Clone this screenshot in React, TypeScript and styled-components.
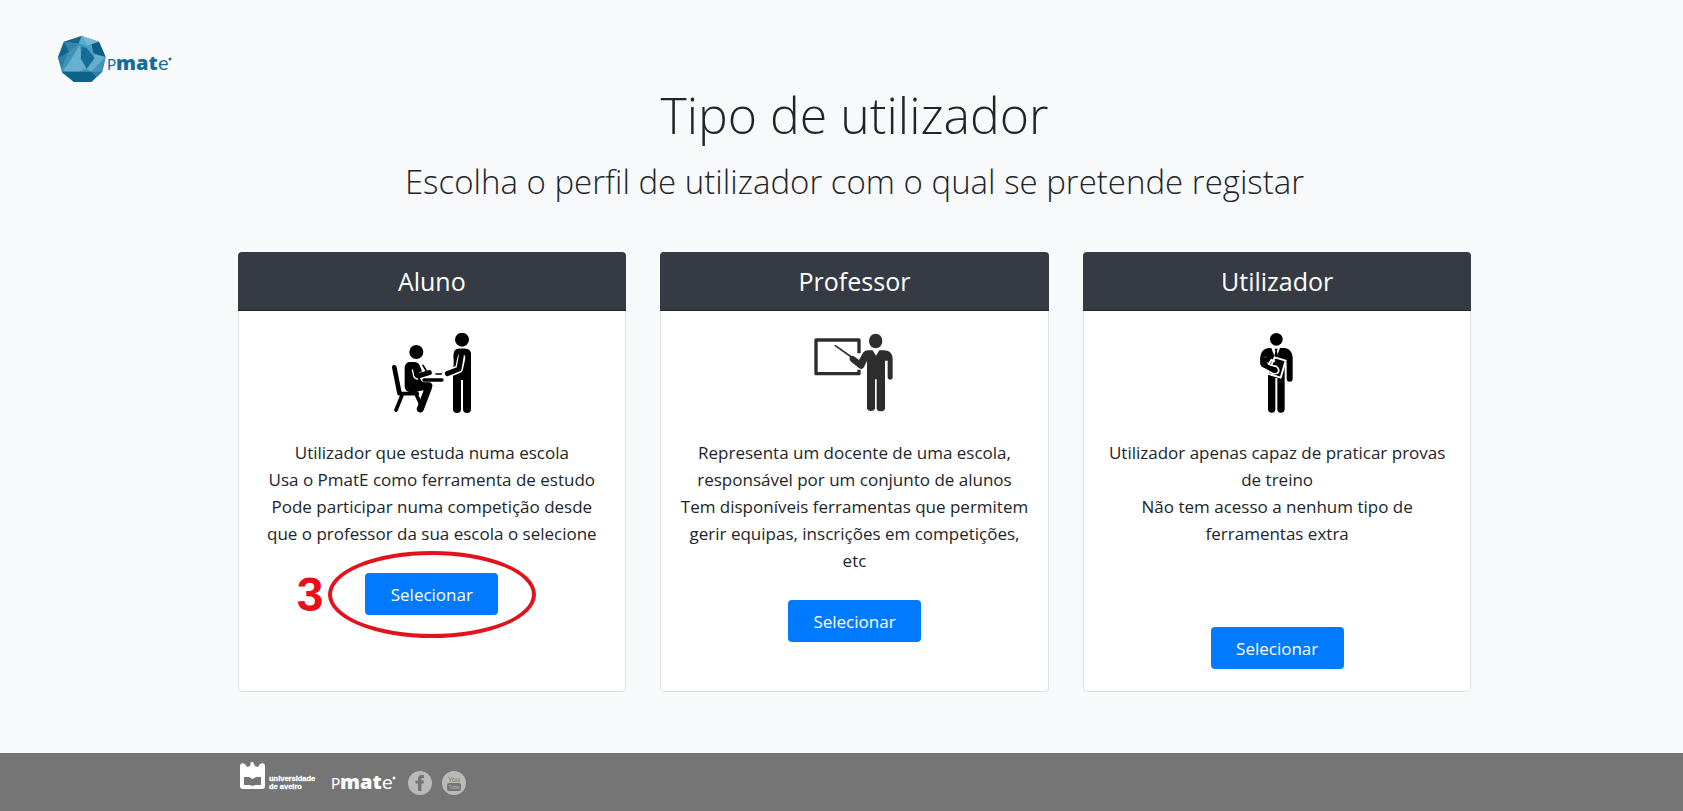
import React from 'react';
import styled, { createGlobalStyle } from 'styled-components';

const GlobalStyle = createGlobalStyle`
  *, *::before, *::after { box-sizing: border-box; }
  body {
    margin: 0;
    background: #f8f9fb;
    color: #212529;
    font-family: "Segoe UI", "Open Sans", "Noto Sans", sans-serif;
    font-size: 17px;
    line-height: 27px;
  }
`;

const Page = styled.div`
  display: flex;
  flex-direction: column;
  min-height: 100vh;
`;

const Header = styled.header`
  display: flex;
  padding: 33px 56px 0;
`;

const LogoLink = styled.a`
  display: block;
  height: 52px;
`;

const Main = styled.main`
  flex: 1;
  padding: 0 0 61px 26px;
`;

const Container = styled.div`
  max-width: 1234px;
  margin: 0 auto;
`;

const Title = styled.h1`
  margin: 0;
  font-size: 50px;
  font-weight: 300;
  line-height: 60px;
  text-align: center;
`;

const Subtitle = styled.p`
  margin: 17px 0 50px;
  font-size: 33px;
  font-weight: 300;
  line-height: 40px;
  text-align: center;
`;

const CardGrid = styled.div`
  display: grid;
  grid-template-columns: repeat(3, 1fr);
  gap: 34px;
`;

const Card = styled.section`
  display: flex;
  flex-direction: column;
  background: #fff;
  border: 1px solid #dfe1e4;
  border-radius: 4px;
  text-align: center;
`;

const CardTitle = styled.h2`
  margin: -1px -1px 0;
  padding: 15px 0 14px;
  background: #363a42;
  border-bottom: 1px solid #22252a;
  border-radius: 4px 4px 0 0;
  color: #fff;
  font-size: 25px;
  font-weight: 400;
  line-height: 29px;
`;

const CardBody = styled.div`
  display: flex;
  flex-direction: column;
  align-items: center;
  padding: 22px 18px;
`;

const Figure = styled.svg`
  width: 80px;
  height: 80px;
  margin-bottom: 26px;
`;

const Description = styled.ul<{ $spareLines?: number }>`
  margin: 0;
  padding: 0 0 ${(p) => 26 + (p.$spareLines ?? 0) * 27}px;
  list-style: none;
`;

const ButtonSlot = styled.div`
  position: relative;
`;

const SelectButton = styled.button`
  display: block;
  width: 133px;
  height: 42px;
  padding: 0;
  background: #007bff;
  border: 0;
  border-radius: 4px;
  color: #fff;
  font: inherit;
  cursor: pointer;
`;

const Ring = styled.span`
  position: absolute;
  inset: -22px -38px -23px -37px;
  border: 4px solid #e3131b;
  border-radius: 50%;
  pointer-events: none;
`;

const StepNumber = styled.span`
  position: absolute;
  right: calc(100% + 42px);
  top: 0;
  color: #e90f17;
  font: bold 48px/44px "Liberation Sans", Arial, sans-serif;
`;

const Footer = styled.footer`
  padding: 8px 0 16px 26px;
  background: #757575;
`;

const FooterRow = styled(Container)`
  display: flex;
  align-items: flex-end;
  gap: 9px;
`;

const FooterLink = styled.a<{ $tall?: boolean }>`
  display: block;
  height: ${(p) => (p.$tall ? 34 : 24)}px;
  margin-right: ${(p) => (p.$tall ? 0 : 1)}px;
`;

function Wordmark({ x, y, color }: { x: number; y: number; color: string }) {
  return (
    <g fill={color}>
      <text x={x} y={y} fontFamily="Lato, sans-serif" fontSize="15">P</text>
      <text x={x + 9} y={y} fontFamily="Open Sans, sans-serif" fontSize="20" fontWeight="800">mat</text>
      <text x={x + 51} y={y} fontFamily="Lato, sans-serif" fontSize="20">e</text>
      <circle cx={x + 63} cy={y - 11} r="1.5" />
    </g>
  );
}

function PmateLogo() {
  return (
    <svg width="118" height="52" viewBox="0 0 118 52" role="img" aria-label="PmatE">
      <g transform="translate(-2 -2) scale(.33333)">
        <path fill="#3f92b9" d="M83 15 135 32 155 78 145 122 112 153H60L24 125 12 78 30 32Z" />
        <path fill="#17678d" d="M83 15 30 32 74 38Z" />
        <path fill="#3386ad" d="M30 32 74 38 42 65 12 78Z" />
        <path fill="#12658a" d="M30 32 45 63 12 82Z" />
        <path fill="#72b9d7" d="M83 15 135 32 100 45Z" />
        <path fill="#5ba9cb" d="M83 15 100 45 74 38Z" />
        <path fill="#0f5f84" d="M135 32 155 78 118 66 112 40Z" />
        <path fill="#4c9dc3" d="M100 45 112 40 120 72 84 48Z" />
        <path fill="#65b0d1" d="M78 42 28 120 75 122 98 112 82 78Z" />
        <path fill="#166c93" d="M83 47 98 51 122 82 98 114 80 82Z" />
        <path fill="#2c80a7" d="M12 80 42 66 22 112Z" />
        <path fill="#62aed0" d="M118 70 155 78 112 122 98 114 122 82Z" />
        <path fill="#4295bb" d="M155 78 145 122 112 122Z" />
        <path fill="#0e6388" d="M24 122H112L128 137 112 153H60Z" />
        <path fill="#2a82a8" d="M112 122H145L128 138Z" />
      </g>
      <Wordmark x={51} y={37} color="#176d94" />
    </svg>
  );
}

function StudentFigure() {
  return (
    <Figure viewBox="36 39 240 240" aria-hidden="true">
      <g fill="none" stroke="#000" strokeLinecap="round" strokeLinejoin="round">
        <path strokeWidth="14" d="M43 142 58 218" />
        <path strokeWidth="11" d="M58 221H112M66 226 48 270M108 222 121 250" />
        <path strokeWidth="21" d="M100 201H146L121 267" />
        <path strokeWidth="15" d="M103 142 113 168 148 158" />
        <path strokeWidth="10" d="M132 180H186" />
        <path strokeWidth="5" d="M129 136 140 154M168 162H184" />
      </g>
      <circle cx="109" cy="96" r="21" />
      <path d="M88 126H104Q118 127 121 141L126 154 115 159 108 144H102L105 166Q107 173 114 173H119Q123 184 132 187H150Q157 190 158 198L110 216H88Q74 213 74 199V142Q76 128 88 126Z" />
      <path fill="none" stroke="#fff" strokeWidth="4" d="M97 148 101 168Q104 177 114 177" />
      <circle cx="246" cy="59" r="21" />
      <path d="M236 86H256Q272 87 273 103V267A12 12 0 0 1 249 267V180H243V267A12 12 0 0 1 219 267V161L221 130V103Q222 87 236 86Z" />
      <g fill="none" strokeLinecap="round" strokeLinejoin="round">
        <path stroke="#fff" strokeWidth="24" d="M244 114 237 147 202 161" />
        <path stroke="#000" strokeWidth="15" d="M244 106 237 147 202 161" />
      </g>
      <path d="M236 86H256Q272 87 273 103V112H257L252 100H236L228 118H221V103Q222 87 236 86Z" />
    </Figure>
  );
}

function TeacherFigure() {
  return (
    <Figure viewBox="43 39 240 240" fill="#2d2d2d" aria-hidden="true">
      <path fill="none" stroke="#2d2d2d" strokeWidth="10" strokeLinejoin="round" d="M178 100V60H49V161H178V149" />
      <path fill="none" stroke="#2d2d2d" strokeWidth="5" strokeLinecap="round" d="M107 77 155 111" />
      <path d="M151 110Q158 104 165 110L178 120 190 98Q195 91 207 91H219L229 107 239 91H253Q277 91 279 115V174A8 8 0 0 1 264 174V122H256V266A13 11 0 0 1 231 266V178H226V266A13 11 0 0 1 202 266V122L193 141Q188 150 179 145L154 125Q147 117 151 110Z" />
      <ellipse cx="228" cy="63" rx="20" ry="22" />
    </Figure>
  );
}

function UserFigure() {
  return (
    <Figure viewBox="-10 39 240 240" aria-hidden="true">
      <circle cx="108" cy="58" r="19" />
      <path d="M84 84H93L106 119 119 84H134Q155 88 157 112V176A9 9 0 0 1 139 176V128H133V267A11 11 0 0 1 111 267V174H105V267A11 11 0 0 1 83 267V154L65 140Q59 134 60 124V109Q63 88 84 84Z" />
      <path d="M103 86H112L110 94 113 108 107 116 102 108 105 94Z" />
      <path stroke="#fff" strokeWidth="6" strokeLinejoin="round" d="M103 112 136 122 121 173 82 161Z" />
      <path stroke="#fff" strokeWidth="5" strokeLinejoin="round" d="M77 113V127L88 135 108 139Q119 147 113 158 106 163 96 160L66 142V116Z" />
      <path d="M60 112H80V128L89 137 107 143Q113 149 109 156 103 159 96 156L65 140Q59 134 60 124Z" />
      <path fill="none" stroke="#fff" strokeWidth="6" d="M84 134 93 120 104 124" />
    </Figure>
  );
}

interface Profile {
  name: string;
  figure: React.ReactNode;
  lines: string[];
  spareLines?: number;
  step?: number;
}

const profiles: Profile[] = [
  {
    name: 'Aluno',
    figure: <StudentFigure />,
    lines: [
      'Utilizador que estuda numa escola',
      'Usa o PmatE como ferramenta de estudo',
      'Pode participar numa competição desde que o professor da sua escola o selecione',
    ],
    step: 3,
  },
  {
    name: 'Professor',
    figure: <TeacherFigure />,
    lines: [
      'Representa um docente de uma escola, responsável por um conjunto de alunos',
      'Tem disponíveis ferramentas que permitem gerir equipas, inscrições em competições, etc',
    ],
  },
  {
    name: 'Utilizador',
    figure: <UserFigure />,
    lines: [
      'Utilizador apenas capaz de praticar provas de treino',
      'Não tem acesso a nenhum tipo de ferramentas extra',
    ],
    spareLines: 2,
  },
];

export default function App() {
  return (
    <Page>
      <GlobalStyle />
      <Header>
        <LogoLink href="#"><PmateLogo /></LogoLink>
      </Header>
      <Main>
        <Container>
          <Title>Tipo de utilizador</Title>
          <Subtitle>Escolha o perfil de utilizador com o qual se pretende registar</Subtitle>
          <CardGrid>
            {profiles.map((p) => (
              <Card key={p.name}>
                <CardTitle>{p.name}</CardTitle>
                <CardBody>
                  {p.figure}
                  <Description $spareLines={p.spareLines}>
                    {p.lines.map((line) => <li key={line}>{line}</li>)}
                  </Description>
                  <ButtonSlot>
                    <SelectButton type="button">Selecionar</SelectButton>
                    {p.step && <Ring />}
                    {p.step && <StepNumber>{p.step}</StepNumber>}
                  </ButtonSlot>
                </CardBody>
              </Card>
            ))}
          </CardGrid>
        </Container>
      </Main>
      <Footer>
        <FooterRow>
          <FooterLink href="#" $tall>
            <svg width="84" height="34" viewBox="0 0 84 34" role="img" aria-label="Universidade de Aveiro">
              <path fill="#fff" d="M2 4 4 2 7 3 9 6 12 5 13 1 15 1 17 5 20 6 22 3 25 2 27 4V25Q27 28 24 28H5Q2 28 2 25Z" />
              <path fill="#757575" d="M6 16H11L14.500 18 18 16H23V24H17L14.500 25 12 24H6Z" />
              <g fill="#fff" stroke="#fff" strokeWidth=".3" fontFamily="Liberation Sans, sans-serif" fontSize="7.500" fontWeight="700">
                <text x="31" y="20">universidade</text>
                <text x="31" y="28">de aveiro</text>
              </g>
            </svg>
          </FooterLink>
          <FooterLink href="#" $tall>
            <svg width="68" height="34" viewBox="0 0 68 34" role="img" aria-label="PmatE">
              <Wordmark x={0} y={28} color="#fff" />
            </svg>
          </FooterLink>
          <FooterLink href="#">
            <svg width="24" height="24" viewBox="0 0 24 24" role="img" aria-label="Facebook">
              <circle cx="12" cy="12" r="12" fill="#b9b9b9" />
              <path fill="#757575" d="M10 20V12.500H7.500V9.500H10V7.500Q10 4 13.500 4H16V7H14.500Q13.500 7 13.500 8V9.500H16L15.600 12.500H13.500V20Z" />
            </svg>
          </FooterLink>
          <FooterLink href="#">
            <svg width="24" height="24" viewBox="0 0 24 24" role="img" aria-label="YouTube">
              <circle cx="12" cy="12" r="12" fill="#b9b9b9" />
              <rect x="5" y="12" width="14" height="8" rx="2" fill="#757575" />
              <g textAnchor="middle" fontFamily="Liberation Sans, sans-serif">
                <text x="12" y="10.500" fontSize="7" fill="#757575">You</text>
                <text x="12" y="18" fontSize="5" fill="#b9b9b9">Tube</text>
              </g>
            </svg>
          </FooterLink>
        </FooterRow>
      </Footer>
    </Page>
  );
}
